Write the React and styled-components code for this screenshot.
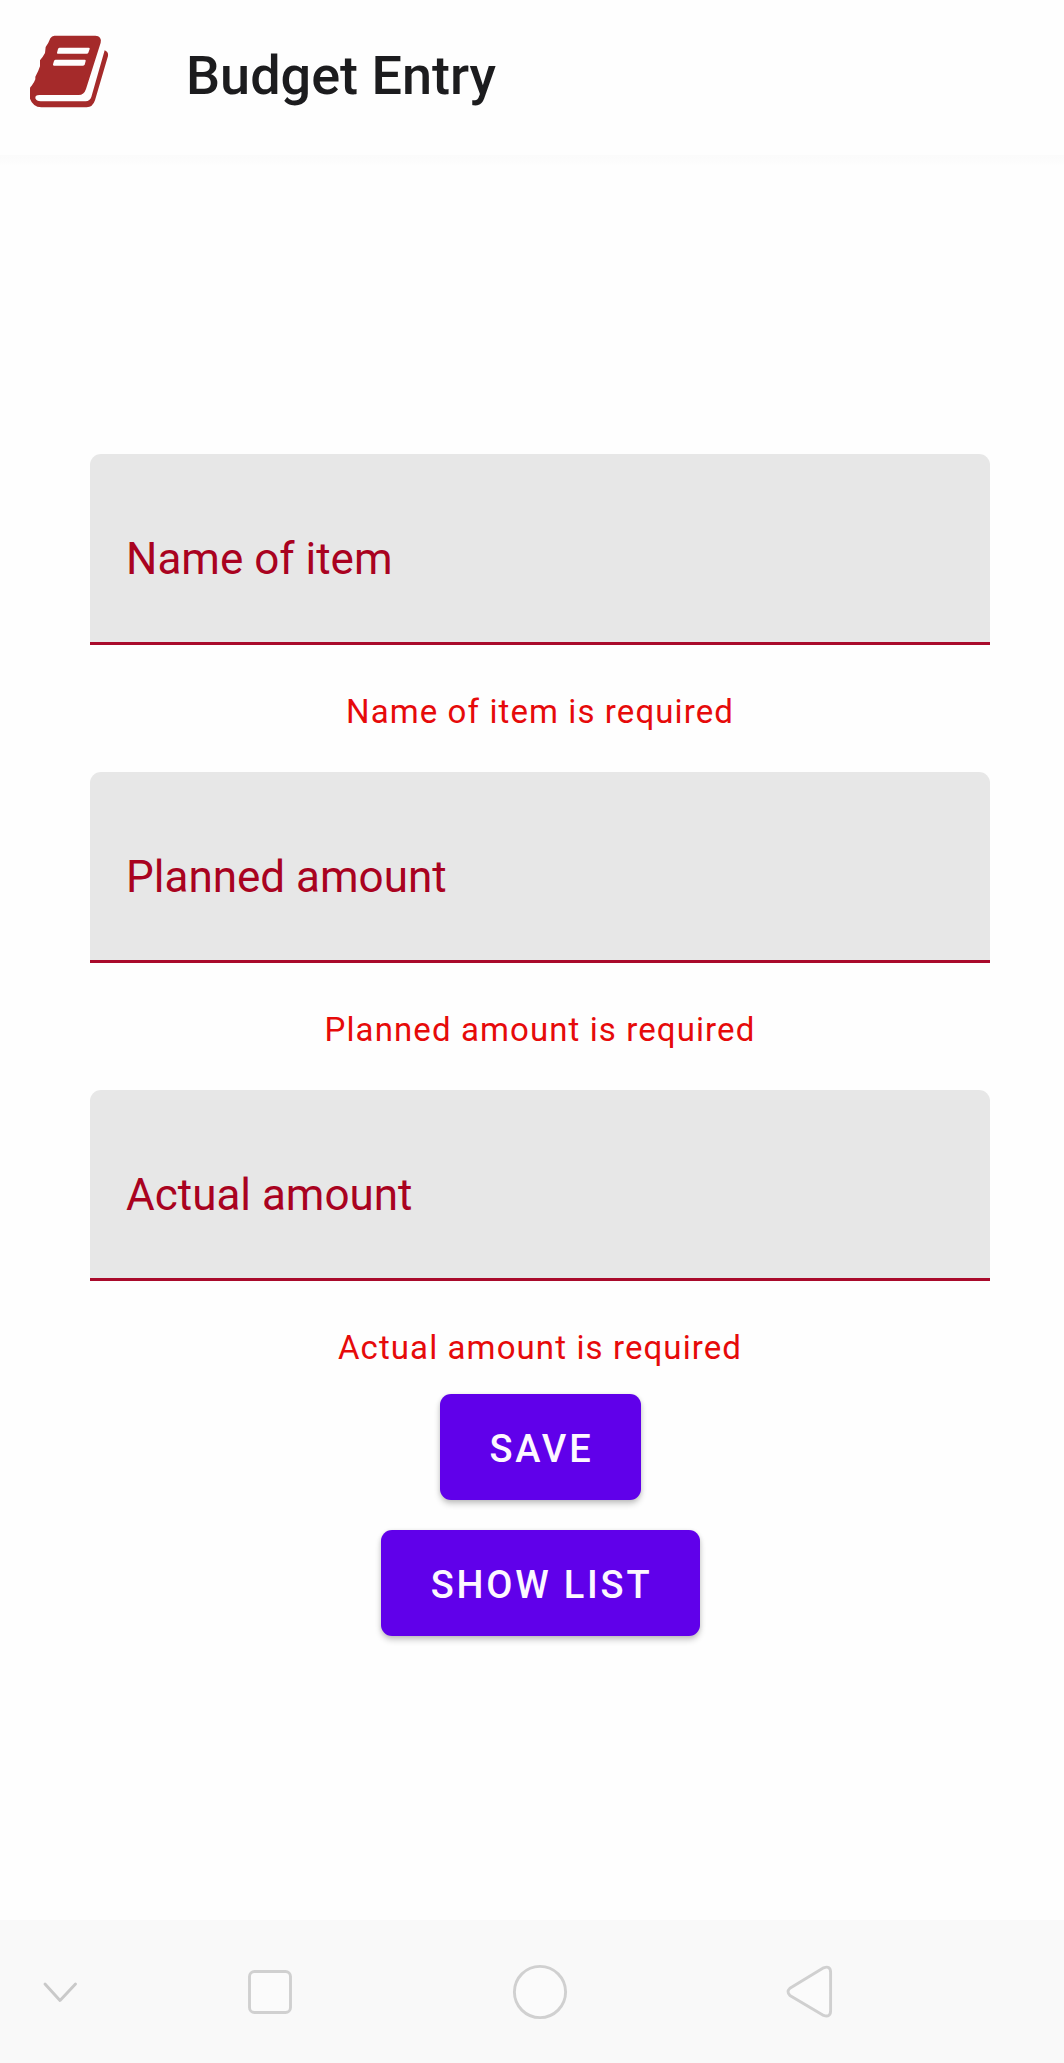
import React from "react";
import styled, { createGlobalStyle } from "styled-components";

const GlobalStyle = createGlobalStyle`
  *, *::before, *::after { box-sizing: border-box; }
  body { margin: 0; background: #fefefe; font-family: Roboto, "Liberation Sans", sans-serif; }
`;

const Screen = styled.div`
  display: flex;
  flex-direction: column;
  width: 1064px;
  height: 2063px;
  overflow: hidden;
  background: #fefefe;
`;

const AppBar = styled.header`
  display: flex;
  align-items: center;
  flex: none;
  height: 155px;
  padding: 0 0 5px 20px;
`;

const BookIcon = styled.svg`
  width: 100px;
  height: 100px;
  margin-top: -10px;
  flex: none;
`;

const Title = styled.h1`
  margin: 1px 0 0 66px;
  font-size: 54px;
  font-weight: 500;
  line-height: 64px;
  color: #1c1c1e;
  white-space: nowrap;
`;

const BarShadow = styled.div`
  flex: none;
  height: 11px;
  background: linear-gradient(#fbfbfb, #fcfcfc 50%, #fefefe);
`;

const Form = styled.main`
  display: flex;
  flex-direction: column;
  align-items: center;
  flex: 1;
  padding: 288px 74px 0 90px;
`;

const FieldGroup = styled.div`
  display: flex;
  flex-direction: column;
  width: 100%;
  height: 318px;
`;

const Field = styled.label`
  display: flex;
  align-items: center;
  height: 191px;
  padding: 22px 36px 0;
  border-bottom: 3px solid #a90a2b;
  border-radius: 11px 11px 0 0;
  background: #e7e7e7;
  color: #a90220;
  font-size: 44px;
  line-height: 52px;
`;

const ErrorText = styled.p`
  margin: 47px 0 0;
  color: #e60a0a;
  font-size: 33px;
  line-height: 40px;
  letter-spacing: 1.1px;
  text-align: center;
`;

const Actions = styled.div`
  display: flex;
  flex-direction: column;
  align-items: center;
  gap: 30px;
  margin-top: -14.5px;
`;

const Button = styled.button`
  width: ${(p) => p.$width}px;
  height: 106px;
  padding: 4px 0 0 3px;
  border: 0;
  border-radius: 11px;
  background: #6000ea;
  box-shadow: 0 4px 6px rgba(0, 0, 0, 0.2), 0 1px 4px rgba(0, 0, 0, 0.1);
  color: #fdf8ff;
  font-family: inherit;
  font-size: 38px;
  font-weight: 500;
  line-height: 46px;
  letter-spacing: 2.8px;
  white-space: nowrap;
`;

const NavBar = styled.nav`
  display: flex;
  align-items: center;
  flex: none;
  height: 143px;
  background: #f9f9f9;
`;

const NavItem = styled.div`
  display: flex;
  justify-content: center;
  width: ${(p) => p.$width}px;
`;

const NavIcon = styled.svg`
  width: 60px;
  height: 60px;
  fill: #fbfbfb;
  stroke: #d0d0d0;
  stroke-width: 2.9;
  stroke-linecap: round;
  stroke-linejoin: round;
`;

const fields = ["Name of item", "Planned amount", "Actual amount"];

export default function App() {
  return (
    <>
      <GlobalStyle />
      <Screen>
        <AppBar>
          <BookIcon viewBox="0 0 300 300" aria-hidden="true">
            <path
              fill="#a52a2a"
              d="M105 47H226Q246 48 242 68L198 207Q192 225 176 225H58Q45 225 46 235Q49 244 62 244H197Q210 243 214 231L254 91Q266 96 264 108L225 241Q218 262 200 262H64Q38 260 30 236V206Q29 201 35 197Q43 187 46 178V170Q55 155 60 139V121Q68 112 75 99L77 81Q86 69 91 55Q96 46 105 47Z"
            />
            <path
              fill="#fefefe"
              d="M119 83H206Q210 83 209 87L205 98Q204 101 200 101H114Q110 101 111 98L114 87Q116 83 119 83ZM107 119H194Q198 119 197 123L194 134Q192 137 188 137H102Q98 137 99 133L102 123Q104 119 107 119Z"
            />
          </BookIcon>
          <Title>Budget Entry</Title>
        </AppBar>
        <BarShadow />
        <Form>
          {fields.map((name) => (
            <FieldGroup key={name}>
              <Field>{name}</Field>
              <ErrorText>{name} is required</ErrorText>
            </FieldGroup>
          ))}
          <Actions>
            <Button $width={201}>SAVE</Button>
            <Button $width={319}>SHOW LIST</Button>
          </Actions>
        </Form>
        <NavBar>
          <NavItem $width={120}>
            <NavIcon viewBox="0 0 60 60">
              <path d="M15 22L30 38.5L45.5 22" fill="none" stroke="#c9c9c9" />
            </NavIcon>
          </NavItem>
          <NavItem $width={300}>
            <NavIcon viewBox="0 0 60 60">
              <rect x="9.5" y="9.5" width="41" height="41" rx="5" />
            </NavIcon>
          </NavItem>
          <NavItem $width={240}>
            <NavIcon viewBox="0 0 60 60">
              <circle cx="30" cy="30" r="25.6" />
            </NavIcon>
          </NavItem>
          <NavItem $width={300}>
            <NavIcon viewBox="0 0 60 60">
              <path d="M9.9 26.2L43.6 5.8Q50.6 3.2 50.6 10.5V48.5Q50.6 55.8 43.6 53.4L9.9 33.4Q6.2 29.8 9.9 26.2Z" />
            </NavIcon>
          </NavItem>
        </NavBar>
      </Screen>
    </>
  );
}
